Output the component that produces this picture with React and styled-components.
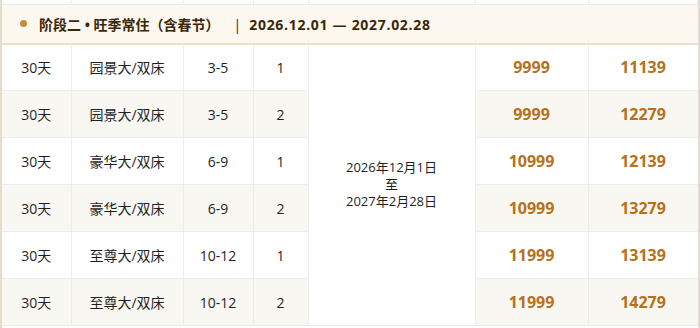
import React from 'react';
import styled, { createGlobalStyle } from 'styled-components';

const GlobalStyle = createGlobalStyle`
  body {
    margin: 0;
    background: #ffffff;
    font-family: "Open Sans", "Noto Sans CJK SC", sans-serif;
  }
`;

const Frame = styled.div`
  width: 700px;
  height: 328px;
  overflow: hidden;
  box-sizing: border-box;
  border-left: 2px solid #e4dccd;
  border-right: 2px solid #e2ddd6;
`;

const Table = styled.table`
  width: 100%;
  border-collapse: collapse;
  table-layout: fixed;
  color: #1f1f1f;
  font-size: 14px;
`;

const TailRow = styled.tr`
  height: 4px;
  td {
    padding: 0;
    border-right: 1px solid #ececec;
    border-bottom: 1px solid #e6ebf2;
  }
`;

const PhaseCell = styled.td`
  height: 38px;
  padding: 0 0 0 18px;
  background: #fdf8ef;
  border-bottom: 2px solid #f1dfc5;
  font-weight: 700;
  color: #3a2708;
  white-space: nowrap;
`;

const PhaseLine = styled.div`
  display: flex;
  align-items: center;
  gap: 12px;
`;

const Dot = styled.span`
  width: 7px;
  height: 7px;
  border-radius: 50%;
  background: #c58b3f;
`;

const Divider = styled.span`
  margin: 0 8px 0 14px;
  font-weight: 400;
`;

const Range = styled.span`
  letter-spacing: 0.7px;
`;

const Row = styled.tr`
  height: 47px;
  background: ${p => (p.$striped ? '#f9f7f2' : '#ffffff')};
`;

const Cell = styled.td`
  padding: 0;
  text-align: center;
  border-right: 1px solid #ececec;
  border-bottom: 1px solid #ececec;
  &:last-child {
    border-right: none;
  }
`;

const Price = styled(Cell)`
  font-size: 16px;
  font-weight: 700;
  color: #b5711c;
`;

const DateCell = styled(Cell)`
  background: #ffffff;
  font-size: 13px;
  line-height: 17px;
`;

const rows = [
  ['园景大/双床', '3-5', '1', '9999', '11139'],
  ['园景大/双床', '3-5', '2', '9999', '12279'],
  ['豪华大/双床', '6-9', '1', '10999', '12139'],
  ['豪华大/双床', '6-9', '2', '10999', '13279'],
  ['至尊大/双床', '10-12', '1', '11999', '13139'],
  ['至尊大/双床', '10-12', '2', '11999', '14279'],
];

export default function App() {
  return (
    <>
      <GlobalStyle />
      <Frame>
        <Table>
          <colgroup>
            <col style={{ width: 69 }} />
            <col style={{ width: 112 }} />
            <col style={{ width: 70 }} />
            <col style={{ width: 55 }} />
            <col style={{ width: 167 }} />
            <col style={{ width: 113 }} />
            <col />
          </colgroup>
          <tbody>
            <TailRow>
              <td /><td /><td /><td /><td /><td /><td />
            </TailRow>
            <tr>
              <PhaseCell colSpan={7}>
                <PhaseLine>
                  <Dot />
                  <span>
                    阶段二 • 旺季常住（含春节）
                    <Divider>|</Divider>
                    <Range>2026.12.01 — 2027.02.28</Range>
                  </span>
                </PhaseLine>
              </PhaseCell>
            </tr>
            {rows.map((r, i) => (
              <Row key={i} $striped={i % 2 === 1}>
                <Cell>30天</Cell>
                <Cell>{r[0]}</Cell>
                <Cell>{r[1]}</Cell>
                <Cell>{r[2]}</Cell>
                {i === 0 && (
                  <DateCell rowSpan={6}>
                    2026年12月1日<br />至<br />2027年2月28日
                  </DateCell>
                )}
                <Price>{r[3]}</Price>
                <Price>{r[4]}</Price>
              </Row>
            ))}
          </tbody>
        </Table>
      </Frame>
    </>
  );
}
